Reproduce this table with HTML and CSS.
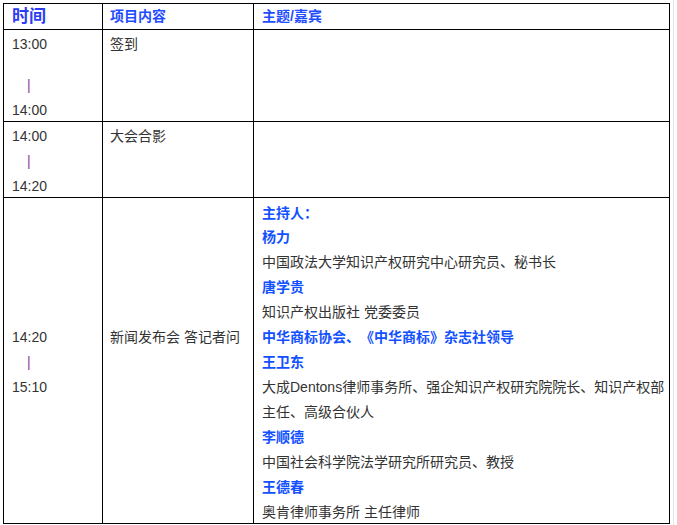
FILE: index.html
```html
<!DOCTYPE html>
<html lang="zh-CN">
<head>
<meta charset="utf-8">
<title>议程</title>
<link rel="stylesheet" href="styles.css">
</head>
<body>
<div class="page">
<table class="agenda">
  <colgroup>
    <col class="c1"><col class="c2"><col class="c3">
  </colgroup>
  <tr class="head">
    <th class="t1">时间</th>
    <th>项目内容</th>
    <th>主题/嘉宾</th>
  </tr>
  <tr class="r1">
    <td>
      <div class="ln">13:00</div>
      <div class="spacer"></div>
      <div class="ln"><span class="bar">|</span></div>
      <div class="ln">14:00</div>
    </td>
    <td><div class="ln">签到</div></td>
    <td></td>
  </tr>
  <tr class="r2">
    <td>
      <div class="ln">14:00</div>
      <div class="ln"><span class="bar">|</span></div>
      <div class="ln">14:20</div>
    </td>
    <td><div class="ln">大会合影</div></td>
    <td></td>
  </tr>
  <tr class="r3">
    <td class="mid">
      <div class="ln">14:20</div>
      <div class="ln"><span class="bar">|</span></div>
      <div class="ln">15:10</div>
    </td>
    <td class="mid">
      <div class="ln">新闻发布会 答记者问</div>
      <div class="ln">&nbsp;</div>
      <div class="ln">&nbsp;</div>
    </td>
    <td class="guests">
      <div class="ln name">主持人<span class="colon">：</span></div>
      <div class="ln name">杨力</div>
      <div class="ln">中国政法大学知识产权研究中心研究员、秘书长</div>
      <div class="ln name">唐学贵</div>
      <div class="ln">知识产权出版社 党委委员</div>
      <div class="ln name">中华商标协会、《中华商标》杂志社领导</div>
      <div class="ln name">王卫东</div>
      <div class="wrap">大成Dentons律师事务所、强企知识产权研究院院长、知识产权部主任、高级合伙人</div>
      <div class="ln name">李顺德</div>
      <div class="ln">中国社会科学院法学研究所研究员、教授</div>
      <div class="ln name">王德春</div>
      <div class="ln">奥肯律师事务所 主任律师</div>
    </td>
  </tr>
</table>
</div>
</body>
</html>
```

FILE: styles.css
```css
html, body {
  margin: 0;
  padding: 0;
  background: #ffffff;
}

.page {
  padding: 3px 0 0 3px;
  border-right: 1px solid #e4e4e4;
  width: 670px;
  height: 522px;
}

.agenda {
  border-collapse: collapse;
  table-layout: fixed;
  width: 666px;
  font-family: "Liberation Sans", "Noto Sans CJK SC", sans-serif;
  font-size: 14px;
  color: #333333;
  text-spacing-trim: space-all;
}

.c1 { width: 99px; }
.c2 { width: 151px; }
.c3 { width: 416px; }

.agenda th,
.agenda td {
  border: 1px solid #000000;
  padding: 0 2px 0 8px;
  vertical-align: top;
  text-align: left;
  line-height: 25px;
}

.agenda th:nth-child(2),
.agenda td:nth-child(2) {
  padding-left: 7px;
}

.head th {
  height: 25px;
  font-size: 14px;
  font-weight: bold;
  color: #1f4dff;
  vertical-align: middle;
}

.head th.t1 {
  font-size: 17px;
  color: #2b3df2;
}

.ln {
  height: 25px;
  line-height: 28px;
  white-space: nowrap;
}

.wrap {
  line-height: 25px;
  padding-top: 2px;
  margin-bottom: -2px;
}

.spacer {
  height: 16px;
}

.bar {
  display: inline-block;
  padding-left: 15px;
  color: #8c3a9c;
}

.agenda td.mid {
  vertical-align: middle;
}

.guests {
  padding-top: 1px;
}

.name {
  font-weight: bold;
  color: #1251ff;
}

.colon {
  font-family: "Noto Sans CJK TC", "Noto Sans CJK SC", sans-serif;
}
```
